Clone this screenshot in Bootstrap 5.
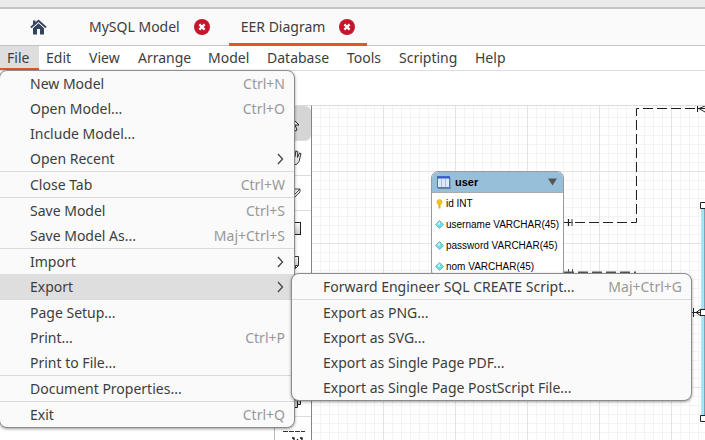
<!DOCTYPE html>
<html lang="en">
<head>
<meta charset="utf-8">
<meta name="viewport" content="width=device-width, initial-scale=1">
<title>EER Diagram</title>
<link href="https://cdn.jsdelivr.net/npm/bootstrap@5.3.0/dist/css/bootstrap.min.css" rel="stylesheet">
<style>
body { font-family: "Noto Sans", sans-serif; font-size: 14px; line-height: 20px; color: #3d3d3d; background: #fff; }
button { color: inherit; }
.window-edge { height: 9px; background: #ebebeb; border-bottom: 2px solid #c4c4c4; }
.tab-strip { height: 37px; background: #fafafa; border-bottom: 1px solid #c4c4c4; padding-left: 30px; gap: 7px; }
.home-link { width: 40px; }
.doc-tab { gap: 14px; padding: 0 12px; border-bottom: 3px solid transparent; padding-top: 1px; margin-bottom: -1px; }
.doc-tab.current { border-bottom-color: #e95420; }
.doc-tab a { color: inherit; text-decoration: none; }
.menu-row { display: grid; grid-template-columns: 39px 43px 49px 70px 59px 80px 52px 76px 47px; height: 25px; border-bottom: 1px solid #dcdcdc; }
.menu-row > li > button { height: 24px; padding: 2px 0 0 7px; border: 0; border-bottom: 2px solid transparent; background: none; text-align: left; width: 100%; }
.menu-row > li > button.opened { background: #dedede; border-bottom-color: #e95420; }
.popup { border: 1px solid #8c8c8c; border-radius: 8px; background: #fafafa; padding: 0; margin: 0; font-size: 14px; color: inherit; box-shadow: 0 1px 3px rgba(0,0,0,.4); }
.popup-file { left: -1px; top: 24px; width: 296px; z-index: 20; }
.popup-export { left: 291px; top: -1px; width: 401px; z-index: 30; }
.popup .dropdown-item { height: 25px; padding: 0 9px 0 30px; color: inherit; line-height: 25px; }
.popup-export .dropdown-item { padding-left: 31px; }
.popup .dropdown-item.chosen { background: #dedede; }
.popup .dropdown-divider { margin: 0; border-color: #dadada; opacity: 1; }
.keys { color: #989898; }
.chev { width: 12px; height: 12px; margin-right: -1px; }
.work { padding-top: 34px; min-height: 0; }
.side-pane { width: 275px; border-right: 1px solid #b8b8b8; }
.tool-strip { width: 37px; border-right: 1px solid #858585; border-top: 1px solid #dcdcdc; }
.tool { height: 35px; border: 0; border-bottom: 1px solid #dcdcdc; background: #fff; padding: 0; }
.tool.last-group { border-bottom-color: transparent; }
.tool.picked { background: #d5d5d5; border-radius: 0 6px 6px 0; }
.tool svg { display: block; margin: 0 auto; width: 36px; height: 34px; }
.tool-space { height: 101px; }
.board { border-top: 1px solid #dcdcdc; overflow: hidden;
  background-image:
    linear-gradient(90deg, #e4e4e4 1px, transparent 1px), linear-gradient(#e4e4e4 1px, transparent 1px),
    linear-gradient(90deg, #f3f3f3 1px, transparent 1px), linear-gradient(#f3f3f3 1px, transparent 1px);
  background-size: 72px 72px, 72px 72px, 9px 9px, 9px 9px;
  background-position: -1px 0, 0 65px, -1px 0, 0 2px; }
.links { left: 0; top: 0; width: 100%; height: 100%; }
.entity { left: 119px; top: 65px; width: 133px; border: 1px solid #999; border-radius: 7px; background: #fff; color: #000; font: 10px/20px "Liberation Sans", Arial, sans-serif; overflow: hidden; }
.entity-head { height: 21px; font-size: 11px; background: #98bfda; padding: 0 6px 0 5px; gap: 4px; border-bottom: 1px solid #aaa; }
.entity svg { flex: none; }
.entity li { gap: 2px; height: 21px; padding-left: 3px; white-space: nowrap; }
</style>
<script src="https://cdn.jsdelivr.net/npm/bootstrap@5.3.0/dist/js/bootstrap.bundle.min.js"></script>
</head>
<body class="vh-100 d-flex flex-column overflow-hidden">
<svg class="d-none" aria-hidden="true">
  <symbol id="close" viewBox="0 0 16 16"><circle cx="8" cy="8" r="8" fill="#c7162b"/><path d="M5.400 5.400l5.200 5.200M10.600 5.400l-5.200 5.200" stroke="#fff" stroke-width="2.200"/></symbol>
  <symbol id="chev" viewBox="0 0 12 12"><path d="M4 1l4.500 5L4 11" fill="none" stroke="#444" stroke-width="1.300"/></symbol>
  <symbol id="gem" viewBox="0 0 9 9"><path d="M4.500 .5l4 4-4 4-4-4z" fill="#6fdde3" stroke="#72a3ab" stroke-width=".8"/><path d="M4.500 1.500L2 4.500h3z" fill="#d4ffff"/></symbol>
</svg>
<div class="window-edge flex-shrink-0"></div>
<nav class="tab-strip d-flex flex-shrink-0" aria-label="Documents">
  <a href="#" class="home-link d-flex align-items-center" aria-label="Home">
    <svg width="17" height="16" viewBox="0 0 17 16"><path d="M1 8.500L8.500 1.800 16 8.500" fill="none" stroke="#34435e" stroke-width="2"/><path d="M3 1.500h2.500v3L3 6.500z" fill="#34435e"/><path d="M3 9l5.500-5L14 9v6.500h-4V10H7v5.500H3z" fill="#34435e"/><path d="M1.800 9.800L8.500 3.800l6.700 6" fill="none" stroke="#fafafa" stroke-width=".7"/></svg>
  </a>
  <div class="doc-tab d-flex align-items-center"><a href="#">MySQL Model</a><button class="btn p-0 border-0 d-flex" aria-label="Close MySQL Model"><svg width="16" height="16"><use href="#close"/></svg></button></div>
  <div class="doc-tab current d-flex align-items-center"><a href="#">EER Diagram</a><button class="btn p-0 border-0 d-flex" aria-label="Close EER Diagram"><svg width="16" height="16"><use href="#close"/></svg></button></div>
</nav>
<ul class="menu-row list-unstyled m-0 flex-shrink-0">
  <li class="position-relative"><button class="opened d-block">File</button>
    <ul class="dropdown-menu show popup popup-file">
      <li><button class="dropdown-item d-flex justify-content-between">New Model<span class="keys">Ctrl+N</span></button></li>
      <li><button class="dropdown-item d-flex justify-content-between">Open Model...<span class="keys">Ctrl+O</span></button></li>
      <li><button class="dropdown-item">Include Model...</button></li>
      <li><button class="dropdown-item d-flex justify-content-between align-items-center">Open Recent<svg class="chev"><use href="#chev"/></svg></button></li>
      <li><hr class="dropdown-divider"></li>
      <li><button class="dropdown-item d-flex justify-content-between">Close Tab<span class="keys">Ctrl+W</span></button></li>
      <li><hr class="dropdown-divider"></li>
      <li><button class="dropdown-item d-flex justify-content-between">Save Model<span class="keys">Ctrl+S</span></button></li>
      <li><button class="dropdown-item d-flex justify-content-between">Save Model As...<span class="keys">Maj+Ctrl+S</span></button></li>
      <li><hr class="dropdown-divider"></li>
      <li><button class="dropdown-item d-flex justify-content-between align-items-center">Import<svg class="chev"><use href="#chev"/></svg></button></li>
      <li class="position-relative"><button class="dropdown-item chosen d-flex justify-content-between align-items-center">Export<svg class="chev"><use href="#chev"/></svg></button>
        <ul class="dropdown-menu show popup popup-export">
          <li><button class="dropdown-item d-flex justify-content-between">Forward Engineer SQL CREATE Script...<span class="keys">Maj+Ctrl+G</span></button></li>
          <li><hr class="dropdown-divider"></li>
          <li><button class="dropdown-item">Export as PNG...</button></li>
          <li><button class="dropdown-item">Export as SVG...</button></li>
          <li><button class="dropdown-item">Export as Single Page PDF...</button></li>
          <li><button class="dropdown-item">Export as Single Page PostScript File...</button></li>
        </ul>
      </li>
      <li><hr class="dropdown-divider"></li>
      <li><button class="dropdown-item">Page Setup...</button></li>
      <li><button class="dropdown-item d-flex justify-content-between">Print...<span class="keys">Ctrl+P</span></button></li>
      <li><button class="dropdown-item">Print to File...</button></li>
      <li><hr class="dropdown-divider"></li>
      <li><button class="dropdown-item">Document Properties...</button></li>
      <li><hr class="dropdown-divider"></li>
      <li><button class="dropdown-item d-flex justify-content-between">Exit<span class="keys">Ctrl+Q</span></button></li>
    </ul>
  </li>
  <li><button class="d-block">Edit</button></li>
  <li><button class="d-block">View</button></li>
  <li><button class="d-block">Arrange</button></li>
  <li><button class="d-block">Model</button></li>
  <li><button class="d-block">Database</button></li>
  <li><button class="d-block">Tools</button></li>
  <li><button class="d-block">Scripting</button></li>
  <li><button class="d-block">Help</button></li>
</ul>
<main class="work d-flex flex-fill">
  <aside class="side-pane flex-shrink-0"></aside>
  <div class="tool-strip d-flex flex-column flex-shrink-0 overflow-hidden">
    <button class="tool picked flex-shrink-0" aria-label="Select"><svg viewBox="0 0 36 34"><path d="M15 10v13l3-3 2 5 2-1-2-5h4z" fill="#fff" stroke="#222"/></svg></button>
    <button class="tool flex-shrink-0" aria-label="Pan"><svg viewBox="0 0 36 34"><path d="M15 23l-4-6 1.500-1 2.500 2V10h2v6l.8-7h2v7l1.200-6 1.800.5-.3 6 2-4.500 1.500.5-2 8-2.500 3z" fill="#eee" stroke="#333"/></svg></button>
    <button class="tool flex-shrink-0" aria-label="Erase"><svg viewBox="0 0 36 34"><path d="M11 21l8-8h6v3l-8 8h-6zM11 21h6l8-8M17 21v3" fill="#eee" stroke="#444"/></svg></button>
    <button class="tool last-group flex-shrink-0" aria-label="Layer"><svg viewBox="0 0 36 34"><defs><linearGradient id="shade" x2="0" y2="1"><stop stop-color="#fff"/><stop offset="1" stop-color="#ccc"/></linearGradient></defs><rect x="10.500" y="11.500" width="15" height="12" fill="url(#shade)" stroke="#222"/></svg></button>
    <button class="tool last-group flex-shrink-0" aria-label="Note"><svg viewBox="0 0 36 34"><path d="M11.500 10.500h12v9l-3 3h-9zM23.500 19.500h-3v3" fill="url(#shade)" stroke="#333"/></svg></button>
    <div class="tool-space flex-shrink-0"></div>
    <button class="tool flex-shrink-0" aria-label="Routine group"><svg viewBox="0 0 36 34"><path d="M13.500 10.500h12v12h-3v3h-9z" fill="#ccc" stroke="#222"/><path d="M22.500 13v10M19.500 14v11" stroke="#222"/></svg></button>
    <button class="tool flex-shrink-0" aria-label="One to one relationship"><svg viewBox="0 0 36 34"><path d="M8 14.500h22" stroke="#333" stroke-dasharray="5 1"/><path d="M17 21h2v8M25 21h2v8M22.500 22v2" fill="none" stroke="#111" stroke-width="1.300"/></svg></button>
  </div>
  <section class="board position-relative flex-fill" aria-label="Diagram">
    <svg class="links position-absolute" fill="none" stroke="#222">
      <path d="M252 116.500h9M263 116.500h61.500V2.500h60" stroke-dasharray="10 4"/>
      <path d="M256.500 113v7" stroke-width="1.300"/><path d="M260 113v7" stroke="#777" stroke-width="1.500"/>
      <path d="M385.500 0v6M386 2.500h10M393 0l-6 2.500 6 3.500"/>
      <path d="M252 166.500h72" stroke-dasharray="10 4" stroke="#555" stroke-width="2"/><path d="M256.500 163v6M260.500 163v6" stroke="#555"/>
      <path d="M379 206.500h10M381.500 202v9M389 203l-5 3.500 5 3.500z"/>
      <path d="M390.500 99v213" stroke="#a9e3f8" stroke-width="3"/><path d="M392.500 99v213" stroke="#7f9fb4"/>
      <path d="M388.500 96.500h6v6h-6zM388.500 203.500h6v6h-6zM388.500 309.500h6v6h-6z" fill="#fff"/>
    </svg>
    <article class="entity position-absolute">
      <header class="entity-head d-flex align-items-center">
        <svg width="14" height="13" viewBox="0 0 14 13"><rect x=".5" y=".5" width="12" height="11" fill="#dde9fa" stroke="#5878bd"/><path d="M0 1.500h13" stroke="#3456d8" stroke-width="2"/><path d="M4.500 3v8M8.500 3v8" stroke="#a9bfe4"/><path d="M1 12.500h13V2" stroke="#6b7f9c" fill="none"/></svg>
        <strong class="flex-fill">user</strong>
        <svg width="9" height="8" viewBox="0 0 9 8"><path d="M0 .5h9L4.500 7.500z" fill="#555"/></svg>
      </header>
      <ul class="list-unstyled m-0">
        <li class="d-flex align-items-center"><svg width="9" height="10" viewBox="0 0 9 10"><circle cx="4.500" cy="3" r="2.600" fill="#f5c51c" stroke="#d9a514" stroke-width=".5"/><path d="M3.500 5h2v4.500h-2z" fill="#e5ae12"/></svg>id INT</li>
        <li class="d-flex align-items-center"><svg width="9" height="9"><use href="#gem"/></svg>username VARCHAR(45)</li>
        <li class="d-flex align-items-center"><svg width="9" height="9"><use href="#gem"/></svg>password VARCHAR(45)</li>
        <li class="d-flex align-items-center"><svg width="9" height="9"><use href="#gem"/></svg>nom VARCHAR(45)</li>
      </ul>
    </article>
  </section>
</main>
</body>
</html>
